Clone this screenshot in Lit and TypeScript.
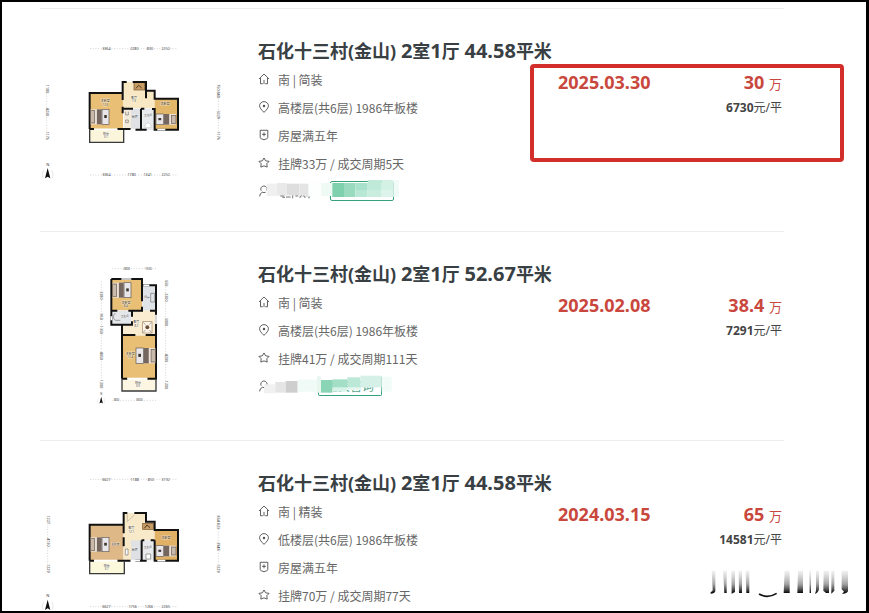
import { LitElement, html, css, svg, nothing } from "lit";
import { customElement, property } from "lit/decorators.js";

type Kind = "home" | "pin" | "shield" | "star" | "person";

interface Deal {
  area: string;
  facts: [Kind, string][];
  date: string;
  total: string;
  unit: string;
  plan: "wide" | "tall" | "wideB";
  agent?: "first" | "second";
  marked?: boolean;
}

const deals: Deal[] = [
  {
    area: "44.58",
    facts: [
      ["home", "南 | 简装"],
      ["pin", "高楼层(共6层) 1986年板楼"],
      ["shield", "房屋满五年"],
      ["star", "挂牌33万 / 成交周期5天"],
    ],
    date: "2025.03.30",
    total: "30",
    unit: "6730",
    plan: "wide",
    agent: "first",
    marked: true,
  },
  {
    area: "52.67",
    facts: [
      ["home", "南 | 简装"],
      ["pin", "高楼层(共6层) 1986年板楼"],
      ["star", "挂牌41万 / 成交周期111天"],
    ],
    date: "2025.02.08",
    total: "38.4",
    unit: "7291",
    plan: "tall",
    agent: "second",
  },
  {
    area: "44.58",
    facts: [
      ["home", "南 | 精装"],
      ["pin", "低楼层(共6层) 1986年板楼"],
      ["shield", "房屋满五年"],
      ["star", "挂牌70万 / 成交周期77天"],
    ],
    date: "2024.03.15",
    total: "65",
    unit: "14581",
    plan: "wideB",
  },
];

const glyphs: Record<Kind, unknown> = {
  home: svg`<path d="M1 19 L17 3 L33 19 M6 16 V34 H13 M28 16 V34 H21 M17 22 V35"/>`,
  pin: svg`<path d="M17 36 C9 28 3 22 3 15 A14 13 0 0 1 31 15 C31 22 25 28 17 36Z"/><circle class="dot" cx="17" cy="16" r="4"/>`,
  shield: svg`<path d="M5 4 H29 V27 Q29 30 25 31 L17 34 L9 31 Q5 30 5 27Z"/><path d="M17 11 V23 M11 17 H23"/>`,
  star: svg`<path d="M17 3 L22 12 L33 14 L26 21 L27 32 L17 28 L7 32 L8 21 L1 14 L12 12Z"/>`,
  person: svg`<path d="M8 18 A10 10 0 1 1 26 17 M12 23 Q4 26 3 36 M12 23 Q17 25 22 23"/>`,
};

const icon = (k: Kind) =>
  html`<svg class="icon" viewBox="-1 0 36 38" aria-hidden="true">${glyphs[k]}</svg>`;

const label = (x: number, y: number, t: string, size = 11) =>
  svg`<text class="dim" x=${x} y=${y} font-size=${size}>${t}</text>`;

const sideLabel = (x: number, y: number, t: string) =>
  svg`<text class="dim" x=${x} y=${y} font-size="11" transform="rotate(90 ${x} ${y})">${t}</text>`;

const compass = (x: number, y: number) => svg`
  <text class="north" x=${x} y=${y - 23}>N</text>
  <path fill="#111" d="M${x} ${y - 16} L${x + 8} ${y + 15} L${x} ${y + 10} L${x - 8} ${y + 15}Z"/>
  <path fill="none" stroke="#ccc" stroke-width="1.5" d="M${x - 12} ${y - 10} Q${x - 20} ${y + 2} ${x - 14} ${y + 14} M${x + 12} ${y - 10} Q${x + 20} ${y + 2} ${x + 14} ${y + 14}"/>`;

const bed = (x: number, y: number, w: number, h: number) => svg`
  <rect x=${x} y=${y} width=${w} height=${h} fill="#eee4da"/>
  <rect x=${x} y=${y + 4} width=${w * 0.22} height=${h - 8} fill="#c9b9ab" stroke="#66584e" stroke-width="2"/>
  <rect x=${x + w * 0.34} y=${y} width=${w * 0.26} height=${h} fill="#75675f"/>
  <rect x=${x + w * 0.62} y=${y} width=${w * 0.38} height=${h} fill="#e9e6ea" stroke="#5f5550" stroke-width="2"/>
  <path d="M${x + w * 0.74} ${y + h * 0.38} h${w * 0.14} v${h * 0.2} h-${w * 0.14}z" fill="#3c342f"/>`;

const bedFlipped = (x: number, y: number, w: number, h: number) =>
  svg`<g transform="translate(${2 * x + w} 0) scale(-1 1)">${bed(x, y, w, h)}</g>`;

const plans = {
  wide: () => html`<svg class="plan" viewBox="30 21 600 462" role="img">
    <path class="rule" d="M180 56H440M180 435H440M50 165V330M565 165V330"/>
    ${label(229, 60, "3364")}${label(313, 60, "2280")}${label(360, 60, "830")}${label(407, 60, "2252")}
    ${label(229, 439, "3364")}${label(305, 439, "1780")}${label(353, 439, "1341")}${label(407, 439, "2252")}
    ${sideLabel(47, 177, "1180")}${sideLabel(47, 246, "4230")}${sideLabel(47, 317, "1176")}
    ${sideLabel(562, 183, "750 840")}${sideLabel(562, 254, "3229")}${sideLabel(562, 317, "1176")}
    <path fill="#f8e9c4" d="M279 156H348V182H374V235H279Z"/>
    <rect x="179" y="190" width="100" height="107" fill="#e9bf76"/>
    <rect x="374" y="205" width="70" height="94" fill="#e3b76a"/>
    <rect x="179" y="298" width="103" height="38" fill="#fbf5dc"/>
    <rect x="281" y="236" width="22" height="64" fill="#f3ebdc"/>
    <rect x="303" y="236" width="30" height="64" fill="#dfe1e5"/>
    <rect x="337" y="236" width="36" height="64" fill="#e7e9ec"/>
    <rect x="312" y="158" width="32" height="22" fill="#c69c63" stroke="#765330" stroke-width="2"/>
    <path d="M318 175l8-9 9 8" stroke="#513a25" stroke-width="3" fill="none"/>
    <path class="wall" d="M179 297V189H278V156H290M308 156H348V182H374V206H444V299H374V237H366M179 297H192M262 297H302M316 299H350M278 189V210M278 230V250M281 236H309M333 236V299M333 236H343M348 182V205"/>
    <path class="thin" d="M179 297V337H281V299"/>
    <path d="M192 298H262M382 299H406M302 299H316" stroke="#fff" stroke-width="5"/>
    <path d="M345 285q10-12 18 0v8h-18z" fill="#fff" stroke="#999"/>
    <path d="M287 245v10h8v-10M287 270h8v8h-8z" fill="none" stroke="#777" stroke-width="2"/>
    ${bed(182, 238, 55, 45)}${bedFlipped(378, 252, 60, 32)}
    ${label(226, 216, "主卧室", 9)}${label(312, 206, "客厅", 9)}${label(405, 226, "次卧室", 9)}${label(314, 265, "厨房", 9)}${label(354, 258, "卫生间", 8)}${label(228, 316, "阳台", 9)}
    ${label(228, 325, "3.7", 8)}${label(312, 217, "7.3", 8)}${label(226, 228, "12.6", 8)}
    ${compass(53, 430)}
  </svg>`,
  tall: () => html`<svg class="plan" viewBox="-120 18 600 462" role="img">
    <path class="rule" d="M97 44H230M97 439H230M64 82V405M257 82V405"/>
    ${label(140, 47, "2800", 9)}${label(205, 47, "1500", 9)}${label(110, 442, "800", 9)}${label(178, 442, "3300", 9)}
    ${sideLabel(61, 124, "3380")}${sideLabel(61, 188, "950")}${sideLabel(61, 228, "1350")}${sideLabel(61, 306, "4050")}${sideLabel(61, 390, "1200")}
    ${sideLabel(254, 88, "650")}${sideLabel(254, 130, "2300")}${sideLabel(254, 204, "3000")}${sideLabel(254, 312, "4200")}${sideLabel(254, 393, "1200")}
    <rect x="94" y="75" width="92" height="94" fill="#e9bf76"/>
    <rect x="187" y="94" width="42" height="76" fill="#e0e3e7"/>
    <rect x="94" y="170" width="60" height="42" fill="#e4e7ea"/>
    <path fill="#f9ecd0" d="M155 170H229V245H126V212H155Z"/>
    <rect x="126" y="245" width="102" height="129" fill="#e9bf76"/>
    <rect x="126" y="374" width="102" height="37" fill="#fcf6e2"/>
    <path class="wall" d="M94 75H186V94H228V374H202M126 374H142M126 374V243H166M94 75V212H126V243M94 170H112M94 212H156V202M145 170H186V158M186 94V142M210 170H228M156 170V188M197 243H228"/>
    <path class="thin" d="M126 374V411H228V374"/>
    <path d="M124 75h30M190 94h18M228 182v28M142 374h60M94 187v12" stroke="#fff" stroke-width="5"/>
    ${bed(98, 86, 55, 45)}${bedFlipped(168, 282, 58, 46)}
    <rect x="188" y="203" width="28" height="34" fill="#fff6e8" stroke="#9d8469" stroke-width="2"/>
    <circle cx="202" cy="220" r="6" fill="#6b503c"/>
    <path d="M190 205l6 7M214 205l-6 7M190 235l6-7M214 235l-6-7M212 118h12v26h-12zM106 177q-12 12 0 22h15" fill="none" stroke="#777" stroke-width="2"/>
    ${label(138, 149, "次卧室", 9)}${label(138, 159, "8.4", 8)}${label(201, 133, "厨房", 8)}${label(134, 188, "卫生间", 8)}${label(169, 208, "客厅", 9)}${label(169, 218, "8.2", 8)}${label(151, 302, "主卧室", 9)}${label(151, 312, "12.4", 8)}${label(174, 390, "阳台", 9)}${label(174, 400, "3.9", 8)}
    <g transform="translate(22 154) scale(0.65)">${compass(64, 438)}</g>
  </svg>`,
  wideB: () => html`<svg class="plan" viewBox="30 0 600 462" role="img">
    <path class="rule" d="M180 31H440M180 413H440M53 140V310M565 140V310"/>
    ${label(229, 35, "6627")}${label(314, 35, "1188")}${label(363, 35, "850")}${label(407, 35, "3192")}
    ${label(229, 417, "6627")}${label(308, 417, "1756")}${label(357, 417, "1266")}${label(407, 417, "2265")}
    ${sideLabel(50, 152, "1227")}${sideLabel(50, 220, "4130")}${sideLabel(50, 298, "1229")}
    ${sideLabel(562, 160, "854 823")}${sideLabel(562, 232, "3948")}${sideLabel(562, 298, "1229")}
    <path fill="#f8e9c8" d="M281 132H348V158H374V214H333V274H281Z"/>
    <rect x="179" y="167" width="101" height="108" fill="#dfb888"/>
    <rect x="374" y="183" width="70" height="92" fill="#e1b165"/>
    <rect x="179" y="276" width="103" height="38" fill="#fbf8dc"/>
    <rect x="303" y="214" width="30" height="60" fill="#dfe1e5"/>
    <rect x="337" y="214" width="36" height="60" fill="#e7e9ec"/>
    <rect x="338" y="163" width="32" height="18" fill="#c69c63" stroke="#765330" stroke-width="2"/>
    <path d="M343 178l8-10 9 8" stroke="#513a25" stroke-width="3" fill="none"/>
    <path class="wall" d="M179 275V167H281V132H292M313 132H348V158H374V183H444V275H374V214M179 275H192M262 275H302M316 275H350M281 167V193M281 205V232M335 214V275M335 214H343M362 214H374"/>
    <path class="thin" d="M179 275V314H283V275"/>
    <path d="M192 275H262M382 275H406M302 275H330" stroke="#fff" stroke-width="5"/>
    <path d="M292 158L313 138M292 134V158" stroke="#b8ad98" stroke-width="2"/>
    <path d="M286 240v18h8v-18zM348 255h14v15h-14z" fill="#fff" stroke="#777" stroke-width="2"/>
    ${bed(182, 205, 55, 43)}${bedFlipped(378, 230, 60, 32)}
    ${label(256, 228, "主卧室", 8)}${label(304, 180, "客厅", 9)}${label(304, 191, "12.1", 8)}${label(408, 210, "次卧室", 9)}${label(314, 247, "厨房", 9)}${label(353, 238, "卫生间", 8)}${label(230, 293, "阳台", 9)}${label(230, 302, "3.7", 8)}
    ${compass(53, 408)}
  </svg>`,
};

const cells = (list: [number, number, number, number, string][]) =>
  list.map(([x, y, w, h, c]) => svg`<rect x=${x} y=${y} width=${w} height=${h} fill=${c}/>`);

const masks = {
  first: () => html`<svg class="mask" viewBox="39 435 450 84" aria-hidden="true">
    ${cells([
      [65, 455, 30, 37, "#f0f0f0"], [95, 453, 30, 38, "#e9e9e9"], [125, 455, 38, 35, "#dedede"], [163, 455, 28, 40, "#e4e4e4"],
      [191, 450, 38, 50, "#fcfffe"], [229, 453, 33, 39, "#effaf5"], [262, 453, 35, 42, "#7fd1ad"],
      [297, 453, 34, 42, "#9adbc0"], [331, 453, 37, 21, "#a9e2cb"], [368, 444, 42, 30, "#bfead9"], [410, 444, 35, 30, "#d3f1e5"],
      [331, 474, 37, 21, "#b9e7d5"], [368, 474, 42, 21, "#c9eddf"], [410, 474, 35, 21, "#dcf4eb"], [445, 444, 17, 51, "#f0faf6"],
    ])}
    <path d="M106 492h12M112 496h8M123 495h14M143 490v9M151 492h9M164 498l5-7M176 491l5 7M192 493v6" stroke="#777" stroke-width="3"/>
  </svg>`,
  second: () => html`<svg class="mask" viewBox="39 348 450 84" aria-hidden="true">
    ${cells([
      [57, 385, 34, 27, "#f1f1f1"], [91, 378, 31, 32, "#e5e5e5"], [122, 375, 36, 35, "#cecece"], [158, 371, 58, 36, "#f0faf6"],
      [216, 362, 12, 48, "#e7f7f0"], [228, 372, 34, 38, "#8ad5b5"], [262, 370, 45, 26, "#a3dfc6"], [307, 364, 39, 32, "#bce8d7"],
      [346, 359, 64, 35, "#d5f1e7"], [262, 394, 44, 13, "#d7f2e8"], [306, 394, 40, 8, "#e5f7f0"], [410, 362, 30, 45, "#f1fbf7"],
    ])}
  </svg>`,
};

@customElement("deal-card")
export class DealCard extends LitElement {
  @property({ attribute: false }) deal!: Deal;

  static styles = css`
    :host {
      display: grid;
      grid-template-columns: 218px minmax(240px, 300px) 1fr auto;
      position: relative;
      padding: 28px 0 26px;
      border-top: 1px solid #ededed;
    }
    .plan {
      display: block;
      width: 200px;
      height: 154px;
    }
    .wall {
      fill: none;
      stroke: #111;
      stroke-width: 6;
    }
    .thin {
      fill: none;
      stroke: #3a3a3a;
      stroke-width: 4;
    }
    .rule {
      fill: none;
      stroke: #bbb;
      stroke-width: 2;
      stroke-dasharray: 3 5;
    }
    .dim {
      fill: #444;
      text-anchor: middle;
      stroke: #fff;
      stroke-width: 3;
      stroke-opacity: 0.4;
      paint-order: stroke;
    }
    .north {
      fill: #333;
      font-size: 12px;
      text-anchor: middle;
    }
    h2 {
      margin: 0;
      font-size: 18px;
      line-height: 28px;
      font-weight: 700;
      white-space: nowrap;
    }
    h2 a {
      color: #394043;
      text-decoration: none;
    }
    .num {
      font-size: 20px;
      line-height: 20px;
    }
    ul {
      margin: 0;
      padding: 0;
      list-style: none;
      font-family: "Noto Sans CJK SC", sans-serif;
    }
    li {
      display: flex;
      align-items: center;
      gap: 8px;
      height: 28px;
      font-size: 12px;
      color: #666;
      white-space: nowrap;
    }
    .icon {
      width: 12px;
      height: 12px;
      fill: none;
      stroke: #555;
      stroke-width: 3;
    }
    .icon .dot {
      fill: #555;
      stroke: none;
    }
    .agent {
      position: relative;
    }
    .agent button {
      box-sizing: border-box;
      width: 64px;
      height: 20px;
      margin-left: 52px;
      padding: 0;
      border: 1px solid #35a27b;
      border-radius: 2px;
      background: #fff;
      color: #58a98c;
      font: inherit;
      line-height: 18px;
    }
    .agent.second button {
      margin-left: 40px;
      border-top-color: transparent;
    }
    .mask {
      position: absolute;
      left: 0;
      top: 0;
      width: 150px;
      height: 28px;
    }
    .date,
    .price {
      padding-top: 32px;
      font-size: 18px;
      line-height: 26px;
      color: #c9473d;
    }
    .date {
      font-weight: 700;
    }
    .price {
      text-align: right;
      padding-right: 2px;
    }
    .price p {
      margin: 0;
    }
    .wan {
      font-size: 13px;
      line-height: 20px;
    }
    .price .unit {
      font-size: 12px;
      color: #444;
    }
    .marker {
      position: absolute;
      left: 490px;
      right: -60px;
      top: 55px;
      height: 90px;
      border: 4px solid #d32f2a;
      border-radius: 4px;
    }
  `;

  render() {
    const d = this.deal;
    return html`
      <div>${plans[d.plan]()}</div>
      <div>
        <h2>
          <a href="#">石化十三村(金山) <span class="num">2</span>室<span class="num">1</span>厅 <span class="num">${d.area}</span>平米</a>
        </h2>
        <ul>
          ${d.facts.map(([k, t]) => html`<li>${icon(k)}<span>${t}</span></li>`)}
          ${d.agent
            ? html`<li class="agent ${d.agent}">
                ${icon("person")}<button type="button">${d.agent === "second" ? "免费咨询" : nothing}</button>${masks[d.agent]()}
              </li>`
            : nothing}
        </ul>
      </div>
      <div class="date">${d.date}</div>
      <div class="price">
        <p><b>${d.total}</b> <span class="wan">万</span></p>
        <p class="unit"><b>${d.unit}</b>元/平</p>
      </div>
      ${d.marked ? html`<div class="marker"></div>` : nothing}
    `;
  }
}

const strokes: string[] = [
  "M65 240H76V302Q74 309 62 309V304Q68 303 68 298Z",
  "M99 240H110V307H103Z",
  "M124 240H135V304L125 309Z",
  "M146 240H156V307H147Z",
  "M167 240H178V307H169Z",
  "M284 240H299V307H281Z",
  "M324 240H339V307H322Z",
  "M358 240H363V307H359Z",
  "M378 240H387V296Q384 308 375 309L378 300Z",
  "M401 240H417V307H408L400 300Z",
  "M424 240H433V300L424 309Z",
  "M455 240H474V302Q470 310 456 309L462 303L455 296Z",
];

@customElement("app-root")
export class AppRoot extends LitElement {
  static styles = css`
    :host {
      display: block;
      position: relative;
      box-sizing: border-box;
      height: 100vh;
      overflow: hidden;
      padding: 6px 82px 0 38px;
      border: 2px solid #000;
      border-right-width: 3px;
      background: #fff;
      font-family: "Noto Sans", "Noto Sans CJK SC", sans-serif;
    }
    .stamp {
      position: absolute;
      right: 14px;
      bottom: 11px;
      width: 144px;
      height: 32px;
    }
  `;

  render() {
    return html`
      <main>${deals.map((d) => html`<deal-card .deal=${d}></deal-card>`)}</main>
      <svg class="stamp" viewBox="54 232 432 96" aria-hidden="true">
        <defs>
          <linearGradient id="fade" gradientUnits="userSpaceOnUse" x1="0" y1="238" x2="0" y2="308">
            <stop offset="0" stop-color="#999" stop-opacity="0.1" />
            <stop offset="0.6" stop-color="#666" stop-opacity="0.6" />
            <stop offset="1" stop-color="#000" />
          </linearGradient>
        </defs>
        ${strokes.map((d) => svg`<path fill="url(#fade)" d=${d} />`)}
        <path d="M207 310Q233 325 260 308" fill="none" stroke="#111" stroke-width="5" />
      </svg>
    `;
  }
}
